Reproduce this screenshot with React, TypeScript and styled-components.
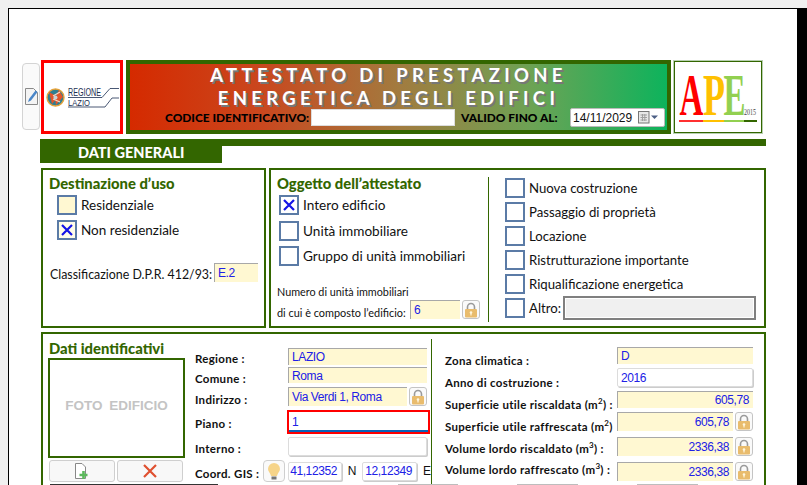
import styled, { createGlobalStyle } from 'styled-components';

const GREEN = '#336600';
const FIELD_YELLOW = '#fff8d2';
const FIELD_BLUE = '#2020e6';
const BODY_FONT = '"Lato", "Liberation Sans", sans-serif';

const GlobalStyle = createGlobalStyle`
  html, body {
    margin: 0;
    height: 485px;
    overflow: hidden;
    background: #f0f0f0;
  }
  body {
    font-family: ${BODY_FONT};
    color: #111;
  }
`;

const Sheet = styled.div`
  margin: 8px 0 0 8px;
  height: 600px;
  box-sizing: border-box;
  background: white;
  border-top: 1px solid #000;
  border-left: 1px solid #000;
  border-right: 10px solid #000;
  padding: 51px 0 0 13px;
`;

const HeaderRow = styled.div`
  display: flex;
  height: 74px;
`;

const EditButton = styled.button`
  width: 18px;
  height: 67px;
  margin: 3px 1px 0 0;
  padding: 0;
  display: flex;
  align-items: center;
  justify-content: center;
  background: #fafafa;
  border: 1px solid #d4d4d4;
  border-radius: 4px;
`;

const LogoBox = styled.div`
  width: 82px;
  box-sizing: border-box;
  border: 3px solid #ff0000;
  background: white;
  margin-right: 3px;
`;

const Banner = styled.div`
  width: 545px;
  box-sizing: border-box;
  border: 4px solid ${GREEN};
  background: linear-gradient(90deg, #d52a00 0%, #c9481f 25%, #a27b3f 50%, #6ca355 75%, #0db35c 100%);
  display: flex;
  flex-direction: column;
  align-items: center;
`;

const BannerTitle = styled.div`
  font: 700 18.5px/23px ${BODY_FONT};
  color: white;
  text-shadow: 2px 2px 0 #777;
  text-align: center;
  letter-spacing: 4.3px;
  white-space: nowrap;
  margin-right: 20px;
`;

const BannerForm = styled.div`
  display: flex;
  align-items: center;
  width: 100%;
  box-sizing: border-box;
  padding-left: 35px;
  margin-top: -2px;
`;

const BannerLabel = styled.span<{ $width: number }>`
  width: ${(p) => p.$width}px;
  flex: none;
  font: 900 11.9px/14px ${BODY_FONT};
  color: #000;
  white-space: nowrap;
`;

const CodeInput = styled.div`
  width: 144px;
  height: 17px;
  background: white;
  border: 1px solid #ddd;
  box-sizing: border-box;
  margin-right: 6px;
`;

const DatePicker = styled.div`
  width: 95px;
  height: 19px;
  box-sizing: border-box;
  background: white;
  border: 1px solid #bbb;
  border-radius: 2px;
  display: flex;
  align-items: center;
  padding: 0 6px 0 2px;
  font: 12px "Liberation Sans", sans-serif;
  color: #111;
`;

const DateValue = styled.span`
  flex: 1;
`;

const ApeBox = styled.div`
  width: 88px;
  height: 72px;
  margin: 1px 0 0 3px;
  box-sizing: border-box;
  background: white;
  border: 1px solid ${GREEN};
  outline: 1px solid #b8d0b0;
`;

const SectionHead = styled.div`
  display: flex;
  align-items: flex-start;
  width: 726px;
  margin: 5px 0 0 18px;
`;

const SectionTab = styled.div`
  width: 182px;
  height: 24px;
  background: ${GREEN};
  color: white;
  font: 900 14.5px/28px ${BODY_FONT};
  padding-left: 38px;
  box-sizing: border-box;
`;

const SectionRule = styled.div`
  flex: 1;
  height: 7px;
  background: ${GREEN};
`;

const PanelRow = styled.div`
  display: flex;
  gap: 3px;
  width: 725px;
  margin: 5px 0 0 19px;
`;

const Panel = styled.section<{ $width?: number }>`
  height: 160px;
  box-sizing: border-box;
  border: 2px solid ${GREEN};
  background: white;
  ${(p) => (p.$width ? `width: ${p.$width}px;` : 'flex: 1;')}
`;

const UsePanel = styled(Panel)`
  padding: 5px 0 0 6px;
`;

const SubjectPanel = styled(Panel)`
  display: flex;
`;

const PanelTitle = styled.h2`
  margin: 0;
  font: 900 14.8px/16px ${BODY_FONT};
  color: ${GREEN};
  white-space: nowrap;
`;

const OptionList = styled.div<{ $left: number; $top: number; $gap: number }>`
  display: flex;
  flex-direction: column;
  gap: ${(p) => p.$gap}px;
  margin: ${(p) => p.$top}px 0 0 ${(p) => p.$left}px;
`;

const Option = styled.label<{ $size: number }>`
  display: flex;
  align-items: center;
  gap: 4px;
  height: 20px;
  font-size: ${(p) => p.$size}px;
  white-space: nowrap;
`;

const CheckBox = styled.span<{ $fill?: string }>`
  width: 20px;
  height: 20px;
  flex: none;
  box-sizing: border-box;
  border: 2px solid #5b7ba6;
  background: ${(p) => p.$fill ?? 'white'};
  display: flex;
  align-items: center;
  justify-content: center;
`;

const ClassLabel = styled.span`
  width: 164px;
  flex: none;
  font-size: 12.4px;
  white-space: nowrap;
  padding-top: 4px;
`;

const ClassRow = styled.div`
  display: flex;
  align-items: center;
  margin: 23px 0 0 1px;
`;

const Field = styled.div<{ $width?: number; $height: number; $white?: boolean; $right?: boolean }>`
  ${(p) => (p.$width ? `width: ${p.$width}px;` : 'flex: 1;')}
  height: ${(p) => p.$height}px;
  flex-shrink: 0;
  box-sizing: border-box;
  display: flex;
  align-items: center;
  justify-content: ${(p) => (p.$right ? 'flex-end' : 'flex-start')};
  padding: 0 4px 0 3px;
  font: 12px "Liberation Sans", sans-serif;
  letter-spacing: -0.4px;
  color: ${FIELD_BLUE};
  background: ${(p) => (p.$white ? 'white' : FIELD_YELLOW)};
  ${(p) =>
    p.$white
      ? 'border: 1px solid #dcdcdc; border-radius: 2px; box-shadow: 1px 1px 0 #ccc;'
      : 'border-top: 1px solid #a8a8a8; border-left: 1px solid #a8a8a8;'}
`;

const SubjectLeft = styled.div`
  width: 217px;
  padding: 5px 0 0 6px;
  box-sizing: border-box;
`;

const UnitNote = styled.div`
  margin-top: 19px;
  font-size: 10.8px;
  line-height: 14px;
`;

const UnitRow = styled.div`
  display: flex;
  align-items: center;
  margin-top: 1px;
  font-size: 10.9px;
  white-space: nowrap;
`;

const UnitLabel = styled.span`
  width: 133px;
  padding-top: 6px;
`;

const VerticalRule = styled.div<{ $top: number; $height: number }>`
  width: 1px;
  height: ${(p) => p.$height}px;
  margin-top: ${(p) => p.$top}px;
  flex: none;
  background: ${GREEN};
`;

const SubjectRight = styled.div`
  flex: 1;
`;

const OtherLabel = styled.span`
  width: 30px;
  flex: none;
`;

const OtherInput = styled.div`
  width: 193px;
  height: 24px;
  box-sizing: border-box;
  background: #f0f0f0;
  border: 2px solid #808080;
  box-shadow: inset 0 0 0 1px white;
`;

const IdentityPanel = styled.section`
  width: 725px;
  height: 300px;
  box-sizing: border-box;
  margin: 4px 0 0 19px;
  border: 2px solid ${GREEN};
`;

const IdentityRow = styled.div`
  display: flex;
  height: 150px;
`;

const PhotoColumn = styled.div`
  width: 137px;
  padding: 6px 0 0 5px;
  flex: none;
`;

const PhotoTitle = styled(PanelTitle)`
  margin-left: 1px;
`;

const PhotoBox = styled.div`
  height: 100px;
  margin-top: 2px;
  padding-bottom: 6px;
  box-sizing: border-box;
  border: 2px solid ${GREEN};
  display: flex;
  align-items: center;
  justify-content: center;
  font: 700 13.5px "Liberation Sans", sans-serif;
  word-spacing: 3px;
  color: #c4c4c4;
`;

const PhotoButtons = styled.div`
  display: flex;
  gap: 2px;
  margin: 2px 0 0 1px;
`;

const PhotoButton = styled.button`
  width: 66px;
  height: 22px;
  padding: 0;
  background: #f8f8f8;
  border: 1px solid #cfcfcf;
  border-radius: 3px;
  display: flex;
  align-items: center;
  justify-content: center;
`;

const FormColumn = styled.div<{ $left: number; $right: number; $width: number; $top: number }>`
  width: ${(p) => p.$width}px;
  margin: ${(p) => p.$top}px ${(p) => p.$right}px 0 ${(p) => p.$left}px;
  flex: none;
  display: flex;
  flex-direction: column;
`;

const FormRow = styled.div<{ $height: number; $after: number }>`
  height: ${(p) => p.$height}px;
  margin-bottom: ${(p) => p.$after}px;
  display: flex;
  align-items: center;
`;

const FormLabel = styled.span<{ $width: number; $drop: number }>`
  width: ${(p) => p.$width}px;
  flex: none;
  font-size: 11.5px;
  font-weight: 700;
  letter-spacing: 0.3px;
  white-space: nowrap;
  padding-top: ${(p) => Math.max(p.$drop * 2, 0)}px;
  padding-bottom: ${(p) => Math.max(-p.$drop * 2, 0)}px;

  sup {
    font-size: 8px;
    line-height: 0;
  }
`;

const HighlightField = styled.div`
  width: 143px;
  height: 24px;
  margin-left: -1px;
  flex: none;
  box-sizing: border-box;
  border: 2px solid #ff0000;
  display: flex;
  align-items: center;
  padding: 0 3px;
  background: white;
  box-shadow: inset 0 -2px 0 #0a62b8;
  font: 12px "Liberation Sans", sans-serif;
  color: ${FIELD_BLUE};
`;

const LockButton = styled.button`
  width: 18px;
  height: 19px;
  margin-left: 2px;
  flex: none;
  padding: 0;
  background: #fafafa;
  border: 1px solid #c4c4c4;
  border-radius: 3px;
  display: flex;
  align-items: center;
  justify-content: center;
`;

const BulbButton = styled.button`
  width: 22px;
  height: 22px;
  flex: none;
  margin: 0 3px 0 -25px;
  padding: 0;
  background: #fafafa;
  border: 1px solid #cfcfcf;
  border-radius: 4px;
  display: flex;
  align-items: center;
  justify-content: center;
`;

const CoordSuffix = styled.span`
  width: 20px;
  flex: none;
  text-align: center;
  font: 12px "Liberation Sans", sans-serif;
`;

const NextRow = styled.div`
  display: flex;
  height: 2px;
`;

const NextStub = styled.div<{ $left: number; $width: number; $dark?: boolean }>`
  margin-left: ${(p) => p.$left}px;
  width: ${(p) => p.$width}px;
  height: 1px;
  background: ${(p) => (p.$dark ? '#333' : '#bdbdbd')};
`;

const Cross = () => (
  <svg width="14" height="14" viewBox="0 0 14 14">
    <path d="M2 2 L12 12 M12 2 L2 12" stroke="#1414e6" strokeWidth="2.2" />
  </svg>
);

const Lock = () => (
  <svg width="14" height="16" viewBox="0 0 14 16">
    <path d="M3.5 8 V5 a3.5 3.5 0 0 1 7 0 V8" fill="none" stroke="#9a9a9a" strokeWidth="1.6" />
    <rect x="1" y="7" width="12" height="8.5" rx="1" fill="#e9bc6d" />
    <circle cx="7" cy="10.5" r="1.3" fill="#fff6dd" />
    <rect x="6.4" y="10.5" width="1.2" height="3" fill="#fff6dd" />
  </svg>
);

const Bulb = () => (
  <svg width="14" height="19" viewBox="0 0 14 19">
    <path d="M7 1 a6 6 0 0 1 6 6 c0 2.5 -2.4 4 -3 7 H4 c-.6 -3 -3 -4.500 -3 -7 a6 6 0 0 1 6 -6 z" fill="#f6d489" />
    <rect x="4.500" y="14.500" width="5" height="3" fill="#777" />
  </svg>
);

const EditIcon = () => (
  <svg width="13" height="17" viewBox="0 0 13 17">
    <path d="M.5 .5 H8.500 L12.500 4.500 V16.500 H.5 Z" fill="#f4f4f4" stroke="#8a8a8a" />
    <path d="M3 14 L4 11 L10.500 2.500 L12.500 4 L6 12.500 Z" fill="#4a86c8" />
  </svg>
);

const AddIcon = () => (
  <svg width="14" height="17" viewBox="0 0 14 17">
    <path d="M.5 .5 H7 L10.500 4 V15.500 H.5 Z" fill="white" stroke="#888" />
    <path d="M8.500 8 V16 M4.500 12 H12.500" stroke="#5cb85c" strokeWidth="2.6" />
  </svg>
);

const DeleteIcon = () => (
  <svg width="14" height="14" viewBox="0 0 14 14">
    <path d="M1 1 L13 13 M13 1 L1 13" stroke="#df5030" strokeWidth="2.2" />
  </svg>
);

const CalendarIcon = () => (
  <svg width="20" height="13" viewBox="0 0 20 13">
    <rect x=".5" y=".5" width="10.500" height="11.500" fill="#e8e8e8" stroke="#777" />
    <path d="M2.500 4 H9 M2.500 6.500 H9 M2.500 9 H9 M4.500 3 V10 M6.800 3 V10" stroke="#a0a0a0" />
    <path d="M13 4.500 H20 L16.500 8 Z" fill="#4c5f85" />
  </svg>
);

const RegioneLogo = () => (
  <svg width="76" height="68" viewBox="44 63 76 68">
    <circle cx="55.500" cy="97.500" r="8.500" fill="#2d7f92" stroke="#e6a33a" strokeWidth="1.400" />
    <path d="M49 92 L58 97 L52 104 Z" fill="#e0562c" />
    <path d="M59 90 L63 97 L56 105 L55 98 Z" fill="#e0562c" />
    <path d="M53 96 L60 92 M53 99 L60 102" stroke="#f4dcc8" strokeWidth="1.200" />
    <circle cx="55.500" cy="97.500" r="2" fill="#c8d4d8" />
    <text x="68" y="96" fontFamily="Liberation Sans" fontSize="10" fill="#1c2f52" textLength="33" lengthAdjust="spacingAndGlyphs">REGIONE</text>
    <text x="68" y="106" fontFamily="Liberation Sans" fontSize="9.500" fill="#1c2f52" textLength="22" lengthAdjust="spacingAndGlyphs">LAZIO</text>
    <path d="M68 97.500 H102 L110 88.500 H119" fill="none" stroke="#1c2f52" strokeWidth=".8" />
    <path d="M68 107 H105 L112 98 H119" fill="none" stroke="#1c2f52" strokeWidth=".8" />
  </svg>
);

const ApeLogo = () => (
  <svg width="86" height="70" viewBox="675 62 86 70">
    <g fontFamily="Liberation Serif" fontWeight="700" fontSize="60">
      <text transform="translate(679.500 115) scale(.55 1)" fill="#ff0000">A</text>
      <text transform="translate(703 115) scale(.6 1)" fill="#ffc000">P</text>
      <text transform="translate(723.500 115) scale(.55 1)" fill="#92d050">E</text>
    </g>
    <text x="744" y="115" fontFamily="Liberation Serif" fontSize="7.500" fill="#444" textLength="12" lengthAdjust="spacingAndGlyphs">2015</text>
    <rect x="679" y="120" width="24" height="2" fill="#ff3030" />
    <rect x="703" y="120" width="21" height="2" fill="#ffc000" />
    <rect x="724" y="120" width="20" height="2" fill="#92d050" />
    <rect x="744" y="120" width="13" height="2" fill={GREEN} />
  </svg>
);

const subjectOptions = [
  { label: 'Intero edificio', checked: true },
  { label: 'Unità immobiliare', checked: false },
  { label: 'Gruppo di unità immobiliari', checked: false },
];

const purposeOptions = [
  'Nuova costruzione',
  'Passaggio di proprietà',
  'Locazione',
  'Ristrutturazione importante',
  'Riqualificazione energetica',
];

export default function App() {
  return (
    <>
      <GlobalStyle />
      <Sheet>
        <HeaderRow>
          <EditButton>
            <EditIcon />
          </EditButton>
          <LogoBox>
            <RegioneLogo />
          </LogoBox>
          <Banner>
            <BannerTitle>ATTESTATO DI PRESTAZIONE</BannerTitle>
            <BannerTitle>ENERGETICA DEGLI EDIFICI</BannerTitle>
            <BannerForm>
              <BannerLabel $width={146}>CODICE IDENTIFICATIVO:</BannerLabel>
              <CodeInput />
              <BannerLabel $width={109}>VALIDO FINO AL:</BannerLabel>
              <DatePicker>
                <DateValue>14/11/2029</DateValue>
                <CalendarIcon />
              </DatePicker>
            </BannerForm>
          </Banner>
          <ApeBox>
            <ApeLogo />
          </ApeBox>
        </HeaderRow>

        <SectionHead>
          <SectionTab>DATI GENERALI</SectionTab>
          <SectionRule />
        </SectionHead>

        <PanelRow>
          <UsePanel $width={225}>
            <PanelTitle>Destinazione d’uso</PanelTitle>
            <OptionList $left={8} $top={4} $gap={5}>
              <Option $size={13.5}>
                <CheckBox $fill={FIELD_YELLOW} />
                Residenziale
              </Option>
              <Option $size={13.5}>
                <CheckBox $fill="#fffde8">
                  <Cross />
                </CheckBox>
                Non residenziale
              </Option>
            </OptionList>
            <ClassRow>
              <ClassLabel>Classificazione D.P.R. 412/93:</ClassLabel>
              <Field $width={44} $height={19}>E.2</Field>
            </ClassRow>
          </UsePanel>

          <SubjectPanel>
            <SubjectLeft>
              <PanelTitle>Oggetto dell’attestato</PanelTitle>
              <OptionList $left={2} $top={4} $gap={5.5}>
                {subjectOptions.map((o) => (
                  <Option key={o.label} $size={13.6}>
                    <CheckBox>{o.checked && <Cross />}</CheckBox>
                    {o.label}
                  </Option>
                ))}
              </OptionList>
              <UnitNote>Numero di unità immobiliari</UnitNote>
              <UnitRow>
                <UnitLabel>di cui è composto l’edificio:</UnitLabel>
                <Field $width={50} $height={19}>6</Field>
                <LockButton>
                  <Lock />
                </LockButton>
              </UnitRow>
            </SubjectLeft>
            <VerticalRule $top={7} $height={145} />
            <SubjectRight>
              <OptionList $left={16} $top={8} $gap={4}>
                {purposeOptions.map((label) => (
                  <Option key={label} $size={13.2}>
                    <CheckBox />
                    {label}
                  </Option>
                ))}
                <Option $size={13.2}>
                  <CheckBox />
                  <OtherLabel>Altro:</OtherLabel>
                  <OtherInput />
                </Option>
              </OptionList>
            </SubjectRight>
          </SubjectPanel>
        </PanelRow>

        <IdentityPanel>
          <IdentityRow>
            <PhotoColumn>
              <PhotoTitle>Dati identificativi</PhotoTitle>
              <PhotoBox>FOTO EDIFICIO</PhotoBox>
              <PhotoButtons>
                <PhotoButton>
                  <AddIcon />
                </PhotoButton>
                <PhotoButton>
                  <DeleteIcon />
                </PhotoButton>
              </PhotoButtons>
            </PhotoColumn>

            <FormColumn $left={10} $right={4} $width={232} $top={14}>
              <FormRow $height={17} $after={2}>
                <FormLabel $width={93} $drop={1.5}>Regione :</FormLabel>
                <Field $height={17}>LAZIO</Field>
              </FormRow>
              <FormRow $height={16} $after={4}>
                <FormLabel $width={93} $drop={3}>Comune :</FormLabel>
                <Field $height={16}>Roma</Field>
              </FormRow>
              <FormRow $height={19} $after={4}>
                <FormLabel $width={93} $drop={2.5}>Indirizzo :</FormLabel>
                <Field $height={19}>Via Verdi 1, Roma</Field>
                <LockButton>
                  <Lock />
                </LockButton>
              </FormRow>
              <FormRow $height={24} $after={3}>
                <FormLabel $width={93} $drop={1}>Piano :</FormLabel>
                <HighlightField>1</HighlightField>
              </FormRow>
              <FormRow $height={19} $after={4}>
                <FormLabel $width={93} $drop={1.5}>Interno :</FormLabel>
                <Field $height={19} $white />
              </FormRow>
              <FormRow $height={22} $after={0}>
                <FormLabel $width={93} $drop={2}>Coord. GIS :</FormLabel>
                <BulbButton>
                  <Bulb />
                </BulbButton>
                <Field $width={54} $height={19} $white $right>41,12352</Field>
                <CoordSuffix>N</CoordSuffix>
                <Field $width={55} $height={19} $white $right>12,12349</Field>
                <CoordSuffix>E</CoordSuffix>
              </FormRow>
            </FormColumn>

            <VerticalRule $top={5} $height={145} />

            <FormColumn $left={13} $right={0} $width={308} $top={13}>
              <FormRow $height={17} $after={4}>
                <FormLabel $width={172} $drop={4.5}>Zona climatica :</FormLabel>
                <Field $height={17}>D</Field>
              </FormRow>
              <FormRow $height={19} $after={4}>
                <FormLabel $width={172} $drop={4.5}>Anno di costruzione :</FormLabel>
                <Field $height={19} $white>2016</Field>
              </FormRow>
              <FormRow $height={17} $after={4}>
                <FormLabel $width={172} $drop={4.5}>Superficie utile riscaldata (m<sup>2</sup>) :</FormLabel>
                <Field $height={17} $right>605,78</Field>
              </FormRow>
              <FormRow $height={19} $after={6}>
                <FormLabel $width={172} $drop={4.5}>Superficie utile raffrescata (m<sup>2</sup>)</FormLabel>
                <Field $height={19} $right>605,78</Field>
                <LockButton>
                  <Lock />
                </LockButton>
              </FormRow>
              <FormRow $height={19} $after={6}>
                <FormLabel $width={172} $drop={1.5}>Volume lordo riscaldato (m<sup>3</sup>) :</FormLabel>
                <Field $height={19} $right>2336,38</Field>
                <LockButton>
                  <Lock />
                </LockButton>
              </FormRow>
              <FormRow $height={19} $after={0}>
                <FormLabel $width={172} $drop={-2.5}>Volume lordo raffrescato (m<sup>3</sup>) :</FormLabel>
                <Field $height={19} $right>2336,38</Field>
                <LockButton>
                  <Lock />
                </LockButton>
              </FormRow>
            </FormColumn>
          </IdentityRow>

          <NextRow>
            <NextStub $left={7} $width={168} $dark />
            <NextStub $left={180} $width={60} />
            <NextStub $left={59} $width={61} />
            <NextStub $left={59} $width={61} />
          </NextRow>
        </IdentityPanel>
      </Sheet>
    </>
  );
}
